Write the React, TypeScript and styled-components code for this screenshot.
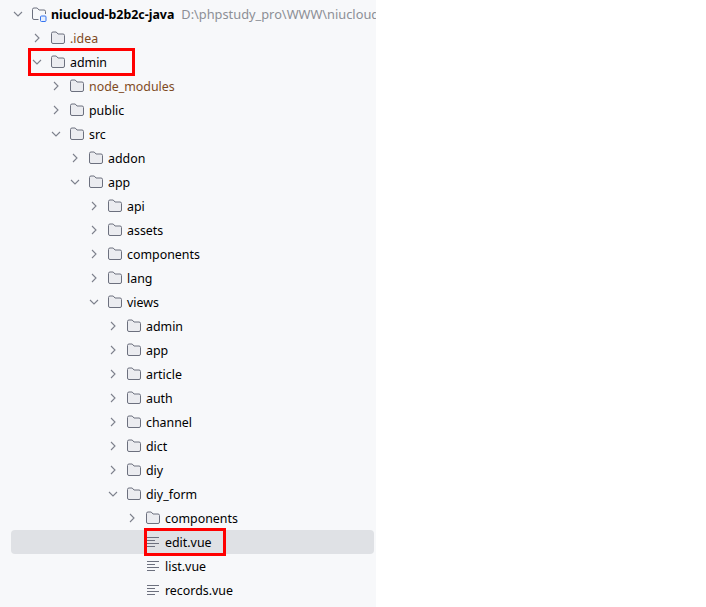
import { ReactElement } from 'react';
import styled, { createGlobalStyle } from 'styled-components';

const GlobalStyle = createGlobalStyle`
    html, body {
        margin: 0;
        padding: 0;
        background: #fff;
    }
`;

const Panel = styled.div`
    width: 376px;
    height: 607px;
    box-sizing: border-box;
    padding-top: 2px;
    background: #f7f8fa;
    overflow: hidden;
    font-family: 'Noto Sans', sans-serif;
    font-size: 12.4px;
    color: #000;
`;

const Row = styled.div<{ $depth: number; $selected?: boolean }>`
    position: relative;
    display: flex;
    align-items: center;
    height: 24px;
    margin: 0 2px 0 11px;
    padding-left: ${p => p.$depth * 19}px;
    border-radius: 4px;
    white-space: nowrap;
    background: ${p => (p.$selected ? '#dfe1e5' : 'transparent')};
`;

const ChevronSlot = styled.span`
    display: flex;
    align-items: center;
    justify-content: center;
    flex: none;
    width: 14px;
    height: 14px;
    margin-right: 6px;
`;

const IconSlot = styled.span`
    display: flex;
    flex: none;
    width: 16px;
    height: 16px;
    margin-right: 4px;
`;

const Name = styled.span<{ $tone?: 'excluded' | 'root' }>`
    font-weight: ${p => (p.$tone === 'root' ? 700 : 400)};
    color: ${p => (p.$tone === 'excluded' ? '#7f4b1e' : '#000')};
`;

const Hint = styled.span`
    margin-left: 7px;
    font-size: 12.8px;
    color: #8c8f96;
`;

const Mark = styled.span<{ $left: number; $width: number; $top: number; $height: number }>`
    position: absolute;
    left: ${p => p.$left}px;
    top: ${p => p.$top}px;
    width: ${p => p.$width}px;
    height: ${p => p.$height}px;
    box-sizing: border-box;
    border: 3px solid #f00;
`;

function Chevron({ open }: { open: boolean }): ReactElement {
    return (
        <svg width='14' height='14' viewBox='0 0 14 14' fill='none' stroke='#7d818c' strokeWidth='1.1'>
            {open ? <path d='M3 5l4 4 4-4' /> : <path d='M5 3l4 4-4 4' />}
        </svg>
    );
}

function Folder(): ReactElement {
    return (
        <svg width='16' height='16' viewBox='0 0 16 16' fill='#ebecf0' stroke='#6c707e' strokeWidth='1'>
            <path d='M1.5 3.5a1.5 1.5 0 0 1 1.5-1.5h3.2l1.8 2h5a1.5 1.5 0 0 1 1.5 1.5v6.5a1.5 1.5 0 0 1-1.5 1.5H3a1.5 1.5 0 0 1-1.5-1.5z' />
        </svg>
    );
}

function ModuleFolder(): ReactElement {
    return (
        <svg width='16' height='16' viewBox='0 0 16 16' fill='none'>
            <path d='M7.5 13.5H3A1.5 1.5 0 0 1 1.5 12V3.5A1.5 1.5 0 0 1 3 2h3.2l1.8 2h5a1.5 1.5 0 0 1 1.5 1.5V8' stroke='#6c707e' />
            <rect x='9.5' y='10' width='5.5' height='5.5' rx='1' fill='#e7effd' stroke='#3574f0' />
        </svg>
    );
}

function TextFile(): ReactElement {
    return (
        <svg width='16' height='16' viewBox='0 0 16 16' fill='none' stroke='#6c707e' strokeWidth='1'>
            <path d='M2 3.5h12M2 6.5h8M2 9.5h12M2 12.5h8' />
        </svg>
    );
}

type Item = {
    name: string;
    depth: number;
    kind?: 'folder' | 'file';
    open?: boolean;
    excluded?: boolean;
    selected?: boolean;
};

const items: Item[] = [
    { name: '.idea', depth: 1, excluded: true },
    { name: 'admin', depth: 1, open: true },
    { name: 'node_modules', depth: 2, excluded: true },
    { name: 'public', depth: 2 },
    { name: 'src', depth: 2, open: true },
    { name: 'addon', depth: 3 },
    { name: 'app', depth: 3, open: true },
    { name: 'api', depth: 4 },
    { name: 'assets', depth: 4 },
    { name: 'components', depth: 4 },
    { name: 'lang', depth: 4 },
    { name: 'views', depth: 4, open: true },
    { name: 'admin', depth: 5 },
    { name: 'app', depth: 5 },
    { name: 'article', depth: 5 },
    { name: 'auth', depth: 5 },
    { name: 'channel', depth: 5 },
    { name: 'dict', depth: 5 },
    { name: 'diy', depth: 5 },
    { name: 'diy_form', depth: 5, open: true },
    { name: 'components', depth: 6 },
    { name: 'edit.vue', depth: 6, kind: 'file', selected: true },
    { name: 'list.vue', depth: 6, kind: 'file' },
    { name: 'records.vue', depth: 6, kind: 'file' },
];

export default function App(): ReactElement {
    return (
        <Panel>
            <GlobalStyle />
            <Row $depth={0}>
                <ChevronSlot>
                    <Chevron open />
                </ChevronSlot>
                <IconSlot>
                    <ModuleFolder />
                </IconSlot>
                <Name $tone='root'>niucloud-b2b2c-java</Name>
                <Hint>D:\phpstudy_pro\WWW\niucloud-b2b2c-java</Hint>
            </Row>
            {items.map((item, i) => (
                <Row key={i} $depth={item.depth} $selected={item.selected}>
                    <ChevronSlot>
                        {item.kind !== 'file' && <Chevron open={!!item.open} />}
                    </ChevronSlot>
                    <IconSlot>{item.kind === 'file' ? <TextFile /> : <Folder />}</IconSlot>
                    <Name $tone={item.excluded ? 'excluded' : undefined}>{item.name}</Name>
                    {i === 1 && <Mark $left={17} $top={-2} $width={107} $height={28} />}
                    {item.selected && <Mark $left={133} $top={-2} $width={82} $height={28} />}
                </Row>
            ))}
        </Panel>
    );
}
